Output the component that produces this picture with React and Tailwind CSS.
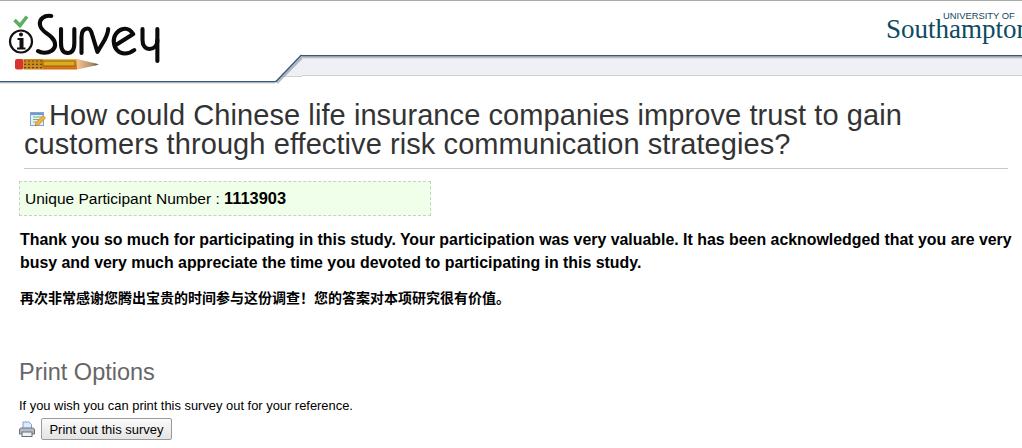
const sans = { fontFamily: '"Liberation Sans", Arial, sans-serif' };

function SurveyLogo() {
  const ink = { fill: "none", stroke: "#0b0b0b", strokeWidth: 4, strokeLinecap: "round", strokeLinejoin: "round" };
  return (
    <svg width="170" height="65" viewBox="0 0 170 65" className="block">
      <defs>
        <linearGradient id="pb" x1="0" y1="0" x2="0" y2="1">
          <stop offset="0" stopColor="#f5b63a" />
          <stop offset="1" stopColor="#d9640f" />
        </linearGradient>
        <linearGradient id="tip" x1="0" y1="0" x2="1" y2="0">
          <stop offset="0" stopColor="#f0c690" />
          <stop offset="0.65" stopColor="#b08f68" />
          <stop offset="0.85" stopColor="#5a5a5a" />
          <stop offset="1" stopColor="#ffffff" />
        </linearGradient>
      </defs>
      <path d="M14.5 9 L20 14.5 L27 5.5" fill="none" stroke="#5fae5f" strokeWidth="3.6" />
      <circle cx="21" cy="30.5" r="11" fill="none" stroke="#111" strokeWidth="2.2" />
      <circle cx="21" cy="23.5" r="2" fill="#111" />
      <path d="M17.5 27 H23.5 V36.5 H25.5 V38.5 H17 V36.5 H19.5 V29 H17.5 Z" fill="#111" />
      <g transform="translate(-1 0) scale(1.025 1)">
        <path {...ink} d="M51 5 C44 4 39 8 40 14 C41 20 47 22 51 26 C56 31 56 37 51 40 C47 42.5 41 42 38 40" />
        <path {...ink} d="M60.5 18 V32 C60.5 39 63 42 67 42 C71 42 73.5 39 73.5 32 V18" />
        <path {...ink} d="M80.5 42 V26 C80.5 20 83 17.5 86.5 17.5 C89 17.5 90 20 91 24 L96 41 L103 29 C105 25 106.5 21 106.5 18" />
        <path {...ink} d="M114 34 L131 23 C128 18.5 124.5 17 121 18 C115 19.5 111.5 25 112 31 C112.5 38 117 42.5 122.5 42.5 C126 42.5 129.5 41 132 39" />
        <path {...ink} d="M140 18 V29 C140 35 143 38 147 38 C151 38 154.5 35 154.5 29" />
        <path {...ink} d="M154.5 18 V50" />
      </g>
      <rect x="15" y="48" width="8.5" height="10.5" rx="2" fill="#d8352a" />
      <rect x="23.5" y="48" width="19.5" height="10.5" fill="#c98a1e" />
      <path d="M24 50 h18.5 M24 53.3 h18.5 M24 56.6 h18.5" stroke="#6e4310" strokeWidth="1.2" strokeDasharray="2 2" />
      <rect x="43" y="48" width="34" height="10.5" fill="url(#pb)" />
      <rect x="43" y="50" width="32" height="5" fill="#d8ad1e" stroke="#70460f" strokeWidth="0.7" />
      <path d="M77 48 L100 53.5 L77 58.5 Z" fill="url(#tip)" />
    </svg>
  );
}

function FormIcon() {
  return (
    <svg width="16" height="16" viewBox="0 0 16 16" className="shrink-0">
      <rect x="0.5" y="1.5" width="13" height="13" fill="#e6f0fb" stroke="#7fa6d6" />
      <rect x="1" y="2" width="12" height="2" fill="#6f9ad0" />
      <path d="M3 6 h8 M3 8.5 h6 M3 11 h4" stroke="#7fb26f" strokeWidth="1" />
      <path d="M5 15 L6 11.5 L13 4.5 L15.5 7 L8.5 14 Z" fill="#efb541" stroke="#b9792a" strokeWidth="0.7" />
    </svg>
  );
}

function PrinterIcon() {
  return (
    <svg width="16" height="16" viewBox="0 0 16 16" className="shrink-0">
      <path d="M4 1 H10 L12.5 3.5 V9 H4 Z" fill="#dfeafa" stroke="#7f9fd0" />
      <path d="M0.5 9 Q0.5 7 2.5 7 H13.5 Q15.5 7 15.5 9 V13 H0.5 Z" fill="#b4bcc6" stroke="#66707c" />
      <rect x="3" y="11" width="10" height="4.5" fill="#eef1f5" stroke="#66707c" />
    </svg>
  );
}

export default function App() {
  return (
    <div className="w-[1022px] h-[448px] overflow-hidden bg-white text-black" style={sans}>
      <header className="flex h-[84px] border-t border-t-[#aaaaaa] overflow-hidden">
        <div className="w-[275px] shrink-0 h-[83px] flex flex-col">
          <div className="h-[80px] pt-[10px]">
            <SurveyLogo />
          </div>
          <div className="h-[1px] bg-[#2f5a85]" />
          <div className="h-[2px] bg-gradient-to-b from-[#9a9a9a] to-white" />
        </div>
        <svg width="27" height="83" viewBox="0 0 27 83" className="block shrink-0">
          <path d="M0 80.5 L1 80.5 L26 54.5 L27 54.5 V75 H8.5 Z" fill="#eef0f6" />
          <path d="M8 75.5 H27" stroke="#cfcfd4" />
          <path d="M2 82 L27 56.5" stroke="#8f8f8f" strokeWidth="2.4" opacity="0.6" />
          <path d="M0 80.5 H1 L26 54.5 H27" fill="none" stroke="#2f5a85" strokeWidth="1.4" />
        </svg>
        <div className="flex-1 min-w-0 flex flex-col">
          <div className="h-[54px] overflow-hidden">
            <div className="flex flex-col items-start pl-[584px] whitespace-nowrap text-[#0d4a60]" style={{ fontFamily: '"Liberation Serif", serif' }}>
              <span className="pl-[57px] mt-[10px] text-[9.4px] leading-[10px]" style={sans}>UNIVERSITY OF</span>
              <span className="text-[27px] leading-[26px] -mt-[5px]">Southampton</span>
            </div>
          </div>
          <div className="h-[1px] bg-[#2f5a85]" />
          <div className="h-[3px] bg-gradient-to-b from-[#8f8f8f] to-[#eef0f6]" />
          <div className="h-[17px] bg-[#eef0f6] border-b border-b-[#cfcfd4]" />
        </div>
      </header>
      <main className="pl-[19px] pt-[17px]">
        <div className="ml-[5px] w-[984px] pb-[9px] border-b border-b-[#c8c8c8]">
          <h1 className="text-[29px] leading-[29px] tracking-[0.08px] text-[#333333]">
            <span className="inline-flex pl-[6px] pr-[3px] align-[-2px]"><FormIcon /></span>
            How could Chinese life insurance companies improve trust to gain customers through effective risk communication strategies?
          </h1>
        </div>
        <div className="mt-[12px] w-[412px] h-[35px] flex items-center pl-[5px] bg-[#f0ffe9] border border-dashed border-[#c4d3bd] text-[15.5px]">
          <span>Unique Participant Number : <b className="text-[16.4px]">1113903</b></span>
        </div>
        <p className="mt-[12px] ml-[1px] w-[1000px] text-[15.9px] leading-[23px] font-bold">
          Thank you so much for participating in this study. Your participation was very valuable. It has been acknowledged that you are very busy and very much appreciate the time you devoted to participating in this study.
        </p>
        <p className="mt-[15px] ml-[1px] text-[14px] leading-[18px] font-bold" style={{ fontFamily: '"Liberation Sans", "Noto Sans CJK SC", sans-serif' }}>
          再次非常感谢您腾出宝贵的时间参与这份调查！您的答案对本项研究很有价值。
        </p>
        <h2 className="mt-[51px] text-[23.5px] leading-[28px] text-[#666666]">Print Options</h2>
        <p className="mt-[13px] text-[12.9px] leading-[14px]">If you wish you can print this survey out for your reference.</p>
        <div className="mt-[5px] flex items-center gap-[6px]">
          <PrinterIcon />
          <button className="w-[131px] h-[22px] text-[13px] leading-none rounded-[2px] border border-[#9a9a9a] bg-gradient-to-b from-[#fafafa] to-[#e4e4e4] text-black">
            Print out this survey
          </button>
        </div>
      </main>
    </div>
  );
}
